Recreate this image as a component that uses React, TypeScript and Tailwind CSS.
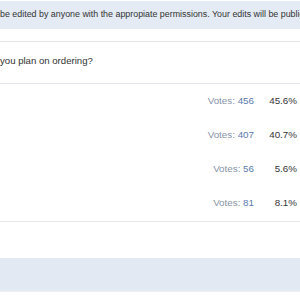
import React from "react";

interface PollRow {
  votes: number;
  percent: string;
}

const rows: PollRow[] = [
  { votes: 456, percent: "45.6%" },
  { votes: 407, percent: "40.7%" },
  { votes: 56, percent: "5.6%" },
  { votes: 81, percent: "8.1%" },
];

const App: React.FC = () => {
  return (
    <div
      className="w-[300px] h-[300px] overflow-hidden bg-white text-[#333]"
      style={{ fontFamily: '"Liberation Sans", Arial, sans-serif' }}
    >
      <div className="mt-[1px] h-[28px] bg-[#e4ebf5] flex items-center overflow-hidden whitespace-nowrap text-[8.9px] text-[#333]">
        <p>be edited by anyone with the appropiate permissions. Your edits will be publicly visible.</p>
      </div>
      <div className="mt-[12px] border-y border-[#e6e7ee] h-[43px] pb-[3px] flex items-center text-[9.6px] whitespace-nowrap">
        <p>you plan on ordering?</p>
      </div>
      <ul className="flex flex-col">
        {rows.map((row, index) => (
          <li key={index} className="h-[34px] flex items-center justify-end text-[9.8px] pr-[3px]">
            <span className="text-[#8793a6]">
              Votes: <span className="text-[#5b7bad]">{row.votes}</span>
            </span>
            <span className="w-[43px] text-right text-[#333]">{row.percent}</span>
          </li>
        ))}
      </ul>
      <div className="mt-[1px] border-t border-[#e6e7ee] h-[37px]"></div>
      <div className="h-[34px] bg-[#e2e9f3] border-b border-[#edeef3]"></div>
    </div>
  );
};

export default App;
